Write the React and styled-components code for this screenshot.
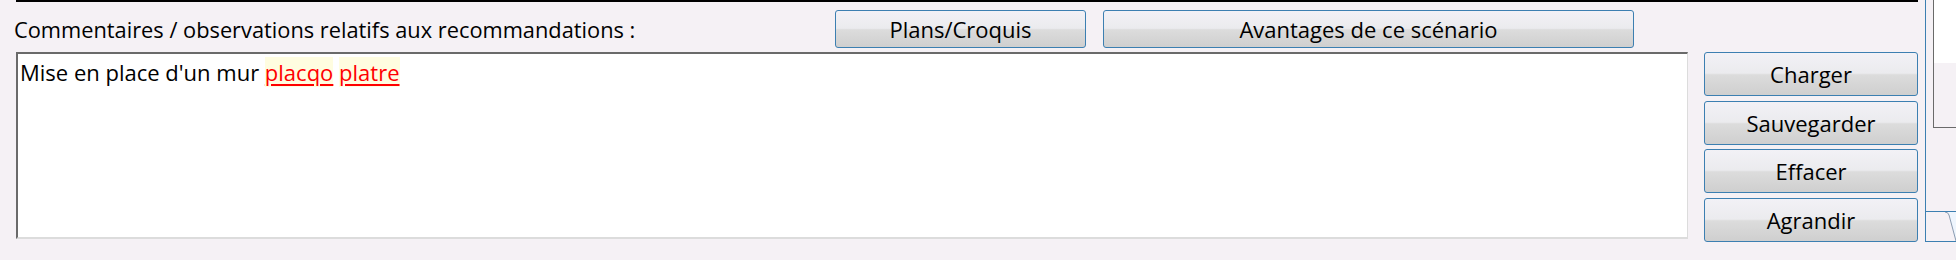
import React from 'react';
import styled, { createGlobalStyle } from 'styled-components';

const GlobalStyle = createGlobalStyle`
    html, body {
        margin: 0;
        padding: 0;
        background: #f5f1f5;
    }
    body {
        font-family: 'Open Sans', 'Noto Sans', 'Liberation Sans', sans-serif;
        color: #000;
    }
`;

const Page = styled.div`
    display: flex;
    width: 1956px;
    height: 260px;
    overflow: hidden;
    background: #f5f1f5;
`;

const Main = styled.div`
    display: flex;
    flex-direction: column;
    width: 1902px;
    padding-left: 16px;
`;

const TopRule = styled.div`
    height: 2px;
    background: #000;
`;

const Header = styled.div`
    display: flex;
    align-items: center;
    height: 38px;
    margin: 8px 0 4px;
`;

const Label = styled.span`
    flex: 0 0 821px;
    margin-left: -2px;
    font-size: 21.8px;
    white-space: nowrap;
`;

const Body = styled.div`
    display: flex;
    gap: 16px;
`;

const Editor = styled.div`
    box-sizing: border-box;
    width: 1672px;
    height: 187px;
    background: #fff;
    border-top: 2px solid #6a6a6a;
    border-left: 2px solid #6a6a6a;
    border-right: 1px solid #dcdcdc;
    border-bottom: 2px solid #dcdcdc;
    padding: 3px 2px;
    font-size: 22px;
    line-height: 30px;
`;

const Misspelled = styled.span`
    color: #ff0000;
    background: #fffde0;
    text-decoration: underline;
    text-decoration-color: #ff0000;
    text-underline-offset: 3px;
`;

const Side = styled.div`
    display: flex;
    flex-direction: column;
    gap: 4.7px;
    width: 214px;
`;

const Button = styled.button`
    box-sizing: border-box;
    width: ${p => p.$w || 214}px;
    height: ${p => p.$h || 44}px;
    padding: 0;
    border: 1px solid #3c7fb1;
    border-radius: 3px;
    background: linear-gradient(#f2f1f6 0%, #ebebee 48%, #dcdcdc 52%, #cfcfcf 100%);
    font-family: inherit;
    font-size: 22px;
    color: #000;
    cursor: default;
`;

const ButtonGap = styled.div`
    width: 17px;
`;

const Strip = styled.div`
    display: flex;
    flex-direction: column;
    flex: 1;
    height: 241px;
    margin-left: 7px;
    border-left: 1px solid #3c7fb1;
    border-bottom: 1px solid #3c7fb1;
`;

const Preview = styled.div`
    height: 127px;
    margin-left: 7px;
    border-left: 1px solid #6a6a6a;
    border-bottom: 1px solid #6a6a6a;
`;

const PreviewWhite = styled.div`
    height: 63px;
    background: #fff;
`;

const TabRow = styled.div`
    margin-top: auto;
    height: 29px;
    border-top: 1px solid #3c7fb1;
    svg {
        display: block;
    }
`;

const rightButtons = ['Charger', 'Sauvegarder', 'Effacer', 'Agrandir'];

export default function App() {
    return (
        <Page>
            <GlobalStyle />
            <Main>
                <TopRule />
                <Header>
                    <Label>Commentaires / observations relatifs aux recommandations :</Label>
                    <Button $w={251} $h={38}>Plans/Croquis</Button>
                    <ButtonGap />
                    <Button $w={531} $h={38}>Avantages de ce scénario</Button>
                </Header>
                <Body>
                    <Editor>
                        Mise en place d'un mur <Misspelled>placqo</Misspelled> <Misspelled>platre</Misspelled>
                    </Editor>
                    <Side>
                        {rightButtons.map(label => (
                            <Button key={label}>{label}</Button>
                        ))}
                    </Side>
                </Body>
            </Main>
            <Strip>
                <Preview>
                    <PreviewWhite />
                </Preview>
                <TabRow>
                    <svg width="30" height="29" viewBox="0 0 30 29">
                        <path d="M19 0 Q22 0 23 3 L30 29 L30 0 Z" fill="#eef5fd" />
                        <path d="M19 0 Q22 0 23 3 L30 29" fill="none" stroke="#8a9bb0" strokeWidth="1" />
                    </svg>
                </TabRow>
            </Strip>
        </Page>
    );
}
